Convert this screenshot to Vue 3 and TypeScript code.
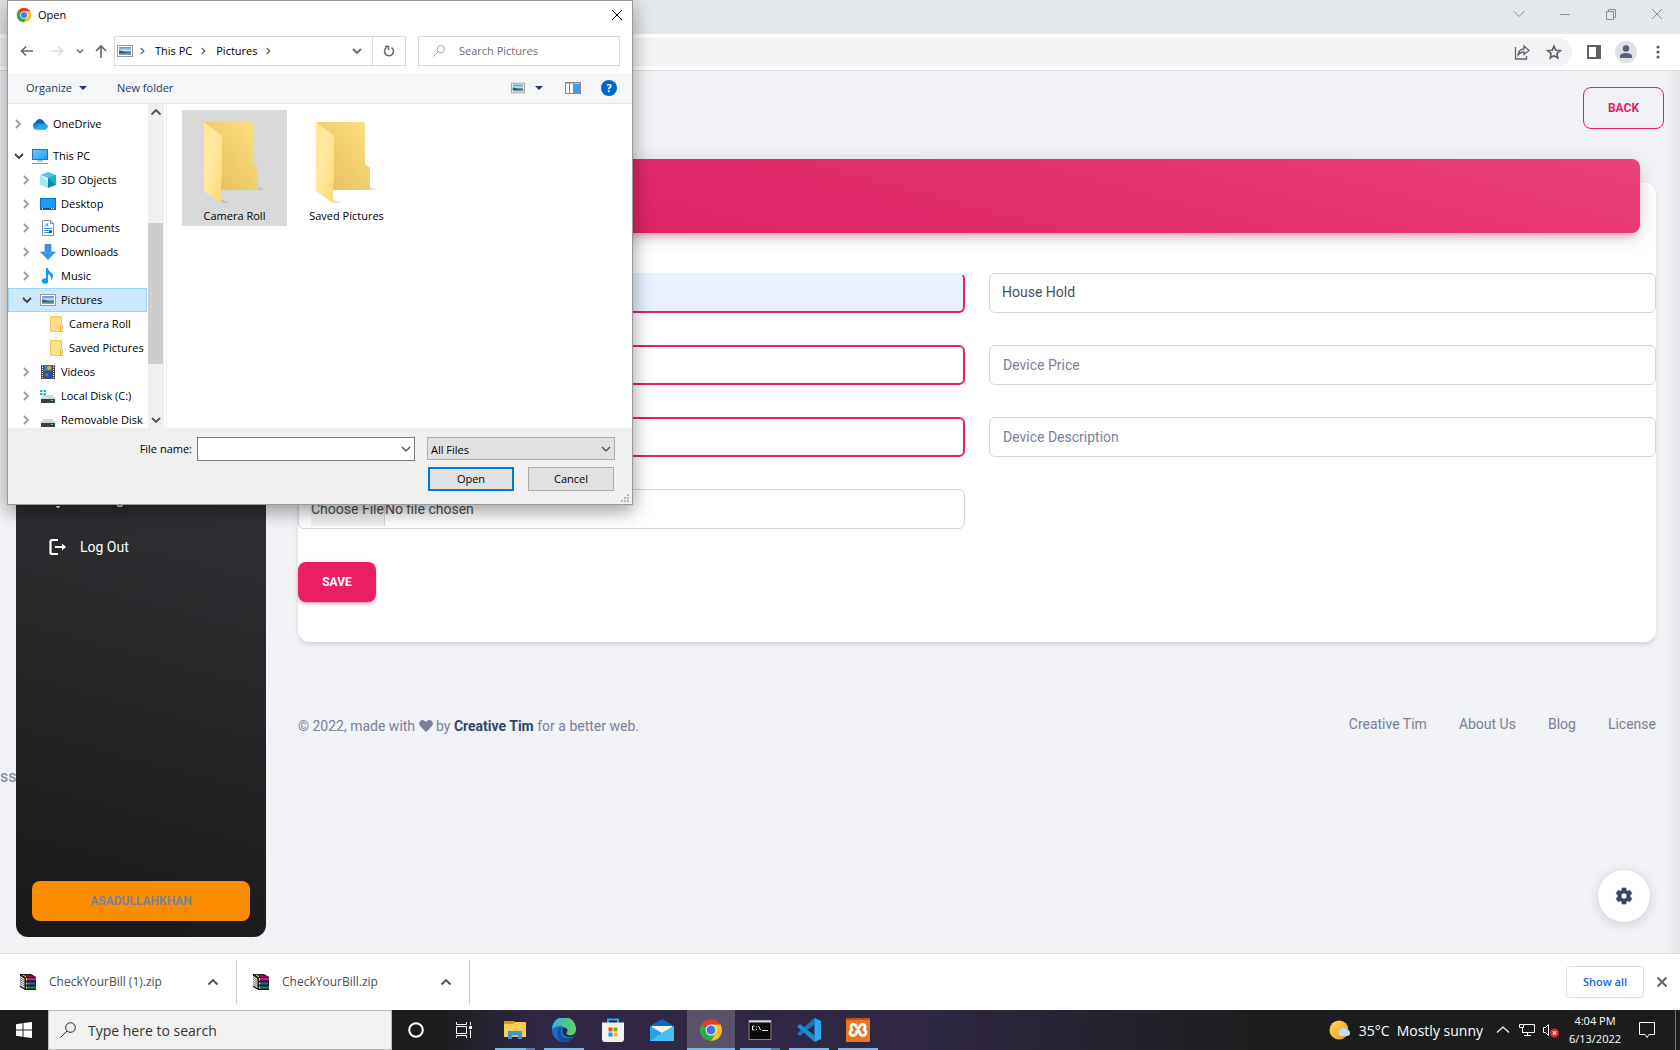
<script setup lang="ts">
import { ref } from 'vue'

interface TreeNode {
  label: string
  icon: string
  level: number
  state: 'open' | 'closed' | 'leaf'
  selected?: boolean
  spaced?: boolean
}

interface TaskApp {
  name: string
  icon: string
  running: boolean
  multi?: boolean
  active?: boolean
}

const tree: TreeNode[] = [
  { label: 'OneDrive', icon: 'onedrive', level: 0, state: 'closed', spaced: true },
  { label: 'This PC', icon: 'pc', level: 0, state: 'open' },
  { label: '3D Objects', icon: 'objects', level: 1, state: 'closed' },
  { label: 'Desktop', icon: 'desktop', level: 1, state: 'closed' },
  { label: 'Documents', icon: 'documents', level: 1, state: 'closed' },
  { label: 'Downloads', icon: 'downloads', level: 1, state: 'closed' },
  { label: 'Music', icon: 'music', level: 1, state: 'closed' },
  { label: 'Pictures', icon: 'pictures', level: 1, state: 'open', selected: true },
  { label: 'Camera Roll', icon: 'folder-small', level: 2, state: 'leaf' },
  { label: 'Saved Pictures', icon: 'folder-small', level: 2, state: 'leaf' },
  { label: 'Videos', icon: 'videos', level: 1, state: 'closed' },
  { label: 'Local Disk (C:)', icon: 'disk-c', level: 1, state: 'closed' },
  { label: 'Removable Disk', icon: 'disk', level: 1, state: 'closed' },
]

const folders = [
  { name: 'Camera Roll', selected: true },
  { name: 'Saved Pictures', selected: false },
]

const apps: TaskApp[] = [
  { name: 'File Explorer', icon: 'explorer', running: true, multi: true },
  { name: 'Edge', icon: 'edge', running: true },
  { name: 'Store', icon: 'store', running: false },
  { name: 'Mail', icon: 'mail', running: false },
  { name: 'Chrome', icon: 'chrome', running: true, active: true },
  { name: 'Command Prompt', icon: 'cmd', running: true, multi: true },
  { name: 'Visual Studio Code', icon: 'vscode', running: true },
  { name: 'XAMPP', icon: 'xampp', running: true },
]

const downloads = ['CheckYourBill (1).zip', 'CheckYourBill.zip']
const footerLinks = ['Creative Tim', 'About Us', 'Blog', 'License']

const fileName = ref('')
const deviceName = ref('')
const deviceModel = ref('')
const deviceQuantity = ref('')
const price = ref('')
const description = ref('')
</script>

<template>
  <div class="screen">
    <svg class="sprite" aria-hidden="true">
      <defs>
        <linearGradient id="g-folder" x1="0" y1="1" x2="1" y2="0">
          <stop offset="0" stop-color="#e3bd5a" /><stop offset="1" stop-color="#ffe080" />
        </linearGradient>
        <linearGradient id="g-flap" x1="0" y1="0" x2="1" y2="1">
          <stop offset="0" stop-color="#ffe596" /><stop offset="0.4" stop-color="#ffe9a2" /><stop offset="1" stop-color="#fbd877" />
        </linearGradient>
        <linearGradient id="g-sky" x1="0" y1="0" x2="0" y2="1">
          <stop offset="0" stop-color="#4b8fdc" /><stop offset="0.5" stop-color="#d7ebf7" /><stop offset="0.6" stop-color="#3f6b66" /><stop offset="1" stop-color="#7fb3cf" />
        </linearGradient>
        <linearGradient id="g-blue" x1="0" y1="0" x2="1" y2="1">
          <stop offset="0" stop-color="#6cc7ff" /><stop offset="1" stop-color="#1f9ff5" />
        </linearGradient>
        <linearGradient id="g-edge" x1="0" y1="0" x2="1" y2="0">
          <stop offset="0" stop-color="#2fb4e0" /><stop offset="1" stop-color="#5fd35b" />
        </linearGradient>
        <linearGradient id="g-sun" x1="0" y1="0" x2="1" y2="1">
          <stop offset="0" stop-color="#ffd95a" /><stop offset="1" stop-color="#f59a10" />
        </linearGradient>
      </defs>
      <symbol id="chrome" viewBox="0 0 24 24">
        <path d="M12 12 2.500 6.500A11 11 0 0 1 21.500 6.500Z" fill="#e33b2e" />
        <path d="M12 12 2.500 6.500A11 11 0 0 0 12 23l5-8Z" fill="#2da94f" />
        <path d="M12 6.500h9.500A11 11 0 0 1 12 23l4.800-8.200Z" fill="#fcc31e" />
        <circle cx="12" cy="12" r="5.500" fill="#fff" />
        <circle cx="12" cy="12" r="4.500" fill="#3b7bea" />
      </symbol>
      <symbol id="pictures" viewBox="0 0 16 16">
        <rect x="0.500" y="2.500" width="15" height="11" fill="#fff" stroke="#9a9a9a" />
        <rect x="2" y="4" width="12" height="8" fill="url(#g-sky)" />
        <path d="M2 7.500c3 0 5 2 9 2.500H2Z" fill="#2f5c55" />
      </symbol>
      <symbol id="onedrive" viewBox="0 0 16 16">
        <path d="M2 11.500a3.500 3.500 0 0 1 1.500-5.500A4.500 4.500 0 0 1 11.500 5l2 3-5 4Z" fill="#0a63c0" />
        <path d="M3.500 13.500A3 3 0 0 1 3 8l5-1 4 .5a3 3 0 0 1 1 6Z" fill="#1490df" />
        <path d="M2 12.500 10 8l5.500 1.500a3 3 0 0 1-2.500 4H4Z" fill="#28a8ea" />
      </symbol>
      <symbol id="pc" viewBox="0 0 16 16">
        <rect x="0.500" y="1.500" width="15" height="10" fill="url(#g-blue)" stroke="#3c6e99" />
        <path d="M5 13h6M0 15.500h16" stroke="#7e93a8" />
      </symbol>
      <symbol id="objects" viewBox="0 0 16 16">
        <path d="M0 3 8 0l8 3-8 3Z" fill="#4fc8d8" />
        <path d="M0 3 8 6v10l-8-3Z" fill="#a5e5ec" /><path d="M16 3 8 6v10l8-3Z" fill="#0c8fa8" />
        <path d="M0 3 8 6v5Z" fill="#d4f5f7" /><path d="M16 3v10L8 6Z" fill="#1ab3cc" />
      </symbol>
      <symbol id="desktop" viewBox="0 0 16 16">
        <rect x="0.500" y="2.500" width="15" height="11" fill="#1a9dff" stroke="#106ebe" />
        <path d="M1 12.500h14" stroke="#0b4f8c" /><path d="M2 12.500h1M11 12.500h1M13 12.500h1" stroke="#fff" />
      </symbol>
      <symbol id="documents" viewBox="0 0 16 16">
        <path d="M2.500.5h8l3 3v12h-11Z" fill="#fff" stroke="#8a8f94" />
        <path d="M10.500.5v3h3" fill="none" stroke="#8a8f94" />
        <path d="M5 6.500l2-3 1 3M4 8.500h8M4 10.500h8M4 12.500h8" fill="none" stroke="#3a8fd0" />
        <path d="M9 11h3v2H9Z" fill="#2b5c88" />
      </symbol>
      <symbol id="downloads" viewBox="0 0 16 16">
        <path d="M5 0h6v8h4.500L8 15.500.5 8H5Z" fill="#3a96e8" stroke="#2379c4" stroke-width=".6" />
      </symbol>
      <symbol id="music" viewBox="0 0 16 16">
        <ellipse cx="5" cy="13" rx="3.200" ry="2.700" fill="#0f9bf0" />
        <path d="M6 0h2c0 4 5 4 5 8 0 2-1 3-2 4 .5-3-.5-5-3-6v7H6Z" fill="#0f9bf0" />
      </symbol>
      <symbol id="folder-small" viewBox="0 0 16 16">
        <path d="M2.500.5h11v9l1 1v5h-12Z" fill="#ffe08a" stroke="#ecc65a" /><path d="M12.500 9.500v6" stroke="#e0b340" />
      </symbol>
      <symbol id="videos" viewBox="0 0 16 16">
        <path d="M1 1h14v14H1Z" fill="#4a4a4a" />
        <path d="M2.500 1v14M13.500 1v14" stroke="#fff" stroke-dasharray="1 1" />
        <path d="M4 1h8v6H4Z" fill="#3b73c9" /><path d="M4 8h8v7H4Z" fill="#2753a6" />
        <circle cx="9" cy="4" r="2" fill="#e8b523" /><circle cx="7" cy="11" r="1.500" fill="#e05a20" /><path d="M4 5h3v2H4Z" fill="#3e8f45" />
      </symbol>
      <symbol id="disk" viewBox="0 0 16 16">
        <path d="M3 7h10l2 4H1Z" fill="#d5d8da" /><rect x="1" y="11" width="14" height="4" fill="#3c4043" /><rect x="11" y="12" width="2" height="1" fill="#4dff4d" />
      </symbol>
      <symbol id="disk-c" viewBox="0 0 16 16">
        <path d="M3 7h10l2 4H1Z" fill="#d5d8da" /><rect x="1" y="11" width="14" height="4" fill="#3c4043" /><rect x="11" y="12" width="2" height="1" fill="#4dff4d" />
        <path d="M0 2h2.500v2H0ZM3.500 2H6v2H3.500ZM0 5h2.500v2H0ZM3.500 5H6v2H3.500Z" fill="#12b5ee" />
      </symbol>
      <symbol id="chev-right" viewBox="0 0 16 16">
        <path d="M5 4l4 4-4 4" fill="none" stroke="currentColor" stroke-width="1.800" />
      </symbol>
      <symbol id="chev-down" viewBox="0 0 16 16">
        <path d="M4 6l4 4 4-4" fill="none" stroke="currentColor" stroke-width="1.800" />
      </symbol>
      <symbol id="chev-thin" viewBox="0 0 16 16">
        <path d="M4 6l4 4 4-4" fill="none" stroke="currentColor" stroke-width="1.200" />
      </symbol>
      <symbol id="chev-up" viewBox="0 0 16 16">
        <path d="M3.500 10.500 8 6l4.500 4.500" fill="none" stroke="currentColor" stroke-width="1.800" />
      </symbol>
      <symbol id="magnifier" viewBox="0 0 16 16">
        <circle cx="10.500" cy="5.500" r="4.800" fill="none" stroke="currentColor" /><path d="M7 9 .5 15.500" stroke="currentColor" />
      </symbol>
      <symbol id="folder-large" viewBox="0 0 61 82">
        <path d="M50 68h11l-7-4ZM17 81h9l-9-4Z" fill="#000" opacity=".1" />
        <path d="M0 0h48q1 0 1 1v41l5 4v21q0 1-1 1H12Z" fill="url(#g-folder)" />
        <path d="M0 0l17 13q1 1 1 2v43l-1 3v20L1 70q-1-1-1-2Z" fill="url(#g-flap)" />
      </symbol>
      <symbol id="rar" viewBox="0 0 16 16">
        <path d="M0 0h11l5 3v13H5L0 13Z" fill="#1a1a1a" />
        <path d="M1 1h9l4 2H5Z" fill="#8c1246" />
        <path d="M6 4h10v2.500H6Z" fill="#c2188a" /><path d="M6 8.500h9v2H6Z" fill="#1470c8" /><path d="M6 12.500h10v2H6Z" fill="#0f9060" />
        <path d="M0 2.500l4.500 3M0 6.500l4.500 3M0 10.500l4.500 3M0 4.500l4.500 3M0 8.500l4.500 3" stroke="#f4f4f4" stroke-width="1.100" />
        <path d="M3 1l3 2M6.500 4v2.500M6.500 8.500v2M6.500 12.500v2" stroke="#f0e040" />
      </symbol>
      <symbol id="explorer" viewBox="0 0 24 24">
        <path d="M1 3h9l2 1h10q1 0 1 1v14H1Z" fill="#f8cf55" /><path d="M1 3h9l1.500 1.500L10 6H1Z" fill="#d9980f" />
        <path d="M5 13h14v8h-4v-4H9v4H5Z" fill="#3d95de" /><path d="M9 17h6v2H9Z" fill="#f0bb3c" />
      </symbol>
      <symbol id="edge" viewBox="0 0 24 24">
        <circle cx="12" cy="12" r="12" fill="#1670c6" />
        <path d="M0 11A12 12 0 0 1 24 11c0 5-4 7-8 6-2-.5-2-2-1-3C16 9 6 5 0 11Z" fill="url(#g-edge)" />
        <path d="M10 9c-4 5-1 13 8 11 2-.4 3-1 4-1-2 3-6 5-10 5C5 23 3 11 10 9Z" fill="#0d4f9e" />
        <path d="M11 10c3-1 6 2 4 4-1 1-1 2 1 3 3 1 6 0 8-2v3l-4 1c-7 1-11-4-9-9Z" fill="#2f2744" />
      </symbol>
      <symbol id="store" viewBox="0 0 24 24">
        <path d="M7 5V1.500h10V5" fill="none" stroke="#2aa7ee" stroke-width="2" />
        <path d="M1 4.500h22V21q0 3-3 3H4q-3 0-3-3Z" fill="#f1f1f2" />
        <path d="M7.500 9.500h4v4h-4Z" fill="#f25022" /><path d="M12.500 9.500h4v4h-4Z" fill="#7fba00" /><path d="M7.500 14.500h4v4h-4Z" fill="#00a4ef" /><path d="M12.500 14.500h4v4h-4Z" fill="#ffb900" />
      </symbol>
      <symbol id="mail" viewBox="0 0 24 24">
        <path d="M0 8 12 1l12 7v5H0Z" fill="#1466b8" /><path d="M2 8h20v7H2Z" fill="#f3f3f3" />
        <path d="M0 8l12 7 12-7v15H0Z" fill="#27a3e8" /><path d="M24 8 12 15 0 23h24Z" fill="#45c0f5" />
      </symbol>
      <symbol id="cmd" viewBox="0 0 24 24">
        <rect x="1" y="2.500" width="22" height="19" fill="#0b0b0b" stroke="#888" /><path d="M1 3.500h22" stroke="#d8d8d8" stroke-width="2" />
        <path d="M6.500 8h-2v4h2M8.500 8.500v1M8.500 11v1M10.500 8l2 4M14 12.500h6" fill="none" stroke="#e8e8e8" />
      </symbol>
      <symbol id="vscode" viewBox="0 0 24 24">
        <path d="M0 15.500 17.500 0v6.500L3 18Z" fill="#1377c2" /><path d="M0 8.500 3 6l14.500 11.500V24Z" fill="#1b8ad6" />
        <path d="M17.500 0 24 3v18l-6.500 3Z" fill="#2fa8f0" />
      </symbol>
      <symbol id="xampp" viewBox="0 0 24 24">
        <rect width="24" height="24" rx="1" fill="#ee7421" /><path d="M0 1h24" stroke="#b5531a" stroke-width="2" />
        <path d="M8 6.500a2.500 2.500 0 0 0-1 5 2.800 2.800 0 0 0 0 6c2.500 0 3-1 3.500-3M16 6.500a2.500 2.500 0 0 1 1 5 2.800 2.800 0 0 1 0 6c-2.500 0-3-1-3.500-3M8 6.500c3 0 1.500 3.500 4 3.500s1-3.500 4-3.500M10.500 14.500c0-2 3-2 3 0" fill="none" stroke="#fff" stroke-width="2.800" stroke-linecap="round" />
      </symbol>
    </svg>

    <header class="chrome-top">
      <div class="tabstrip">
        <svg viewBox="0 0 16 16"><path d="M2.500 5 8 10.500 13.500 5" /></svg>
        <svg viewBox="0 0 16 16"><path d="M3 8.500h10" /></svg>
        <svg viewBox="0 0 16 16"><path d="M3.500 5.500h7v8h-7ZM5.500 5.500v-2h7v8h-2" /></svg>
        <svg viewBox="0 0 16 16"><path d="M3 3l10 10M13 3 3 13" /></svg>
      </div>
      <div class="toolbar">
        <div class="omnibox">
          <svg viewBox="0 0 16 16"><path d="M1.500 3v12h11v-3M4 11c.5-4 3-6 6-6V2l5 4.500-5 4V8c-3 0-4.500 1-6 3Z" fill="none" stroke="#5f6368" stroke-width="1.300" /></svg>
          <svg viewBox="0 0 16 16"><path d="M8 2l1.800 4.200 4.500.4-3.400 3 1 4.400L8 11.700 4.100 14l1-4.400-3.400-3 4.500-.4Z" fill="none" stroke="#5f6368" stroke-width="1.600" /></svg>
        </div>
        <svg class="side-icon" viewBox="0 0 16 16"><path d="M1 1h14v14H1ZM3 3v10h7V3Z" fill="#5f6368" fill-rule="evenodd" /></svg>
        <span class="avatar"><svg viewBox="0 0 16 16"><circle cx="8" cy="4.500" r="3.200" fill="#56607a" /><path d="M2 14v-2c0-4 12-4 12 0v2Z" fill="#56607a" /></svg></span>
        <svg class="more" viewBox="0 0 16 16"><circle cx="8" cy="3" r="1.600" /><circle cx="8" cy="8" r="1.600" /><circle cx="8" cy="13" r="1.600" /></svg>
      </div>
    </header>

    <div class="page">
      <span class="stray">ss</span>
      <aside class="sidebar">
        <nav class="side-nav">
          <a href="#"><svg viewBox="0 0 20 20"><path d="M10 19a2 2 0 0 0 2-2H8a2 2 0 0 0 2 2Zm6-5v-4c0-3-1.500-5-4.500-5.500a1.500 1.500 0 0 0-3 0C5.500 5 4 7 4 10v4l-1 1v1h14v-1Z" fill="#fff" /></svg>Settings</a>
          <a href="#"><svg viewBox="0 0 20 20"><path d="M10 3H4q-1.500 0-1.500 1.500v11Q2.500 17 4 17h6" fill="none" stroke="#fff" stroke-width="2.200" /><path d="M7 10h8" fill="none" stroke="#fff" stroke-width="2" /><path d="M14 6.500 18 10l-4 3.500Z" fill="#fff" /></svg>Log Out</a>
        </nav>
        <button class="user-btn" type="button">ASADULLAHKHAN</button>
      </aside>

      <main class="content">
        <button class="back-btn" type="button">BACK</button>
        <form class="card" @submit.prevent>
          <div class="card-head"></div>
          <div class="fields">
            <input v-model="deviceName" class="field required autofilled" type="text" aria-label="Device name" />
            <select class="field picked" aria-label="Category"><option>House Hold</option></select>
            <input v-model="deviceModel" class="field required" type="text" aria-label="Device model" />
            <input v-model="price" class="field" type="text" placeholder="Device Price" aria-label="Device Price" />
            <input v-model="deviceQuantity" class="field required" type="text" aria-label="Device quantity" />
            <input v-model="description" class="field" type="text" placeholder="Device Description" aria-label="Device Description" />
            <input class="field file" type="file" aria-label="Device image" />
          </div>
          <button class="save-btn" type="submit">SAVE</button>
        </form>
        <footer class="foot">
          <p>© 2022, made with <svg viewBox="0 0 14 14"><path d="M7 13 1 7C-1 4 1 1 3.500 1 5 1 6.300 2 7 3c.7-1 2-2 3.500-2C13 1 15 4 13 7Z" fill="#7b809a" /></svg> by <a href="#"><b>Creative Tim</b></a> for a better web.</p>
          <nav><a v-for="link in footerLinks" :key="link" href="#">{{ link }}</a></nav>
        </footer>
      </main>

      <button class="gear" type="button" aria-label="Configure">
        <svg viewBox="0 0 20 20"><path d="M8 1h4l.5 2.600 1.700 1L16.700 3.700l2 3.500-2 1.700v2.200l2 1.700-2 3.500-2.500-.9-1.700 1L12 19H8l-.5-2.600-1.700-1-2.500.9-2-3.500 2-1.700V8.900l-2-1.700 2-3.500 2.500.9 1.700-1ZM10 6.800a3.200 3.200 0 1 0 0 6.400 3.200 3.200 0 0 0 0-6.400Z" fill="#344767" fill-rule="evenodd" stroke="#344767" stroke-width=".6" stroke-linejoin="round" /></svg>
      </button>
    </div>

    <div class="shelf">
      <div v-for="file in downloads" :key="file" class="dl">
        <svg class="i16"><use href="#rar" /></svg>
        <span>{{ file }}</span>
        <button type="button" aria-label="More"><svg class="i16"><use href="#chev-up" /></svg></button>
      </div>
      <button class="show-all" type="button">Show all</button>
      <button class="shelf-close" type="button" aria-label="Close"><svg viewBox="0 0 16 16"><path d="M3.500 3.500l9 9M12.500 3.500l-9 9" stroke="#5f6368" stroke-width="2" /></svg></button>
    </div>

    <div class="taskbar">
      <button class="slot" type="button" aria-label="Start"><svg class="i16" viewBox="0 0 16 16"><path d="M0 2.200 6.500 1.300v6.200H0ZM7.500 1.100 16 0v7.500H7.500ZM0 8.500h6.500v6.200L0 13.800ZM7.500 8.500H16V16l-8.500-1.100Z" fill="#fff" /></svg></button>
      <label class="task-search">
        <svg class="i16"><use href="#magnifier" /></svg>
        <input type="text" placeholder="Type here to search" />
      </label>
      <button class="slot" type="button" aria-label="Cortana"><svg class="i16" viewBox="0 0 16 16"><circle cx="8" cy="8" r="6.800" fill="none" stroke="#fff" stroke-width="2" /></svg></button>
      <button class="slot" type="button" aria-label="Task view"><svg class="i16" viewBox="0 0 16 16"><path d="M.5 0v2.500h10V0M.5 4.500h10v7H.5ZM.5 16v-2.500h10V16M14.500 0v3M14.500 8v8" fill="none" stroke="#fff" /><path d="M13 4h3v3h-3Z" fill="#fff" /></svg></button>
      <div class="apps">
        <button v-for="app in apps" :key="app.name" class="slot" :class="{ running: app.running, multi: app.multi, active: app.active }" type="button" :aria-label="app.name">
          <svg class="i24"><use :href="'#' + app.icon" /></svg>
        </button>
      </div>
      <div class="tray">
        <svg class="weather" viewBox="0 0 22 20"><circle cx="10" cy="10" r="9.500" fill="url(#g-sun)" /><path d="M11 16a3.500 3.500 0 0 1 0-6 4 4 0 0 1 7 0 3 3 0 0 1 0 6Z" fill="#b9e0fa" /></svg>
        <span class="temp">35°C</span>
        <span class="sky">Mostly sunny</span>
        <svg class="i16" viewBox="0 0 16 16"><path d="M2 10.500 8 5l6 5.500" fill="none" stroke="#fff" stroke-width="1.200" /></svg>
        <svg class="i16" viewBox="0 0 16 16"><path d="M5 2.500h10.500v8H3.500M3.500 6v5M8.500 10.500v3M5 13.500h7M.5 2.500h4v3h-4Z" fill="none" stroke="#fff" /></svg>
        <svg class="i16" viewBox="0 0 16 16"><path d="M.5 5.500h2l3-3v11l-3-3h-2Z" fill="none" stroke="#fff" /><circle cx="11.500" cy="11" r="4.500" fill="#d9272e" /><path d="M9.800 9.300l3.400 3.400M13.200 9.300l-3.400 3.400" stroke="#fff" stroke-width="1.200" /></svg>
        <div class="clock"><span>4:04 PM</span><span>6/13/2022</span></div>
        <svg class="i16" viewBox="0 0 16 16"><path d="M.5.5h15v12H10l-2 3-2-3H.5Z" fill="none" stroke="#fff" /></svg>
        <span class="peek"></span>
      </div>
    </div>

    <section class="dialog" role="dialog" aria-label="Open">
      <div class="dlg-title">
        <svg class="i16"><use href="#chrome" /></svg>
        <span>Open</span>
        <button type="button" aria-label="Close"><svg class="i16" viewBox="0 0 16 16"><path d="M3 3l10 10M13 3 3 13" stroke="#000" /></svg></button>
      </div>
      <div class="dlg-nav">
        <button class="w30" type="button" aria-label="Back"><svg class="i16" viewBox="0 0 16 16"><path d="M14 8H3M7 3.500 2.500 8 7 12.500" fill="none" stroke="#666" stroke-width="1.600" /></svg></button>
        <button class="w30" type="button" aria-label="Forward"><svg class="i16" viewBox="0 0 16 16"><path d="M2 8h11M9 3.500 13.500 8 9 12.500" fill="none" stroke="#ddd" stroke-width="1.600" /></svg></button>
        <button class="w16" type="button" aria-label="Recent"><svg class="i12"><use href="#chev-down" /></svg></button>
        <button class="w26" type="button" aria-label="Up"><svg class="i16" viewBox="0 0 16 16"><path d="M8 15V3.500M3 8l5-5 5 5" fill="none" stroke="#666" stroke-width="1.600" /></svg></button>
        <div class="address">
          <svg class="i16"><use href="#pictures" /></svg>
          <svg class="i12"><use href="#chev-right" /></svg>
          <span>This PC</span>
          <svg class="i12"><use href="#chev-right" /></svg>
          <span>Pictures</span>
          <svg class="i12"><use href="#chev-right" /></svg>
          <svg class="i16 drop"><use href="#chev-down" /></svg>
          <button type="button" aria-label="Refresh"><svg class="i16" viewBox="0 0 16 16"><path d="M10.500 4.500a4.500 4.500 0 1 1-5 0M4 3.500h3.500V7" fill="none" stroke="#666" stroke-width="1.500" /></svg></button>
        </div>
        <label class="dlg-search"><svg class="i12"><use href="#magnifier" /></svg><input type="text" placeholder="Search Pictures" /></label>
      </div>
      <div class="dlg-tools">
        <button type="button">Organize <i class="tri"></i></button>
        <button type="button">New folder</button>
        <span class="grow"></span>
        <svg class="i14"><use href="#pictures" /></svg>
        <i class="tri"></i>
        <svg class="i16" viewBox="0 0 16 16"><rect x=".5" y="2.500" width="15" height="11" fill="#fff" stroke="#888" /><path d="M0 3h16M4.500 3v10M8.500 3v10" stroke="#888" /><path d="M9 4h6v9H9Z" fill="#3d9ae8" /></svg>
        <button class="help" type="button">?</button>
      </div>
      <div class="dlg-body">
        <ul class="tree">
          <li v-for="node in tree" :key="node.label + node.level" :class="[node.state, 'lv' + node.level, { selected: node.selected, spaced: node.spaced }]">
            <svg class="i16 arrow"><use v-if="node.state !== 'leaf'" :href="node.state === 'open' ? '#chev-down' : '#chev-right'" /></svg>
            <svg class="i16"><use :href="'#' + node.icon" /></svg>
            <span>{{ node.label }}</span>
          </li>
        </ul>
        <div class="scroll">
          <svg class="i16"><use href="#chev-up" /></svg>
          <div class="track"><div class="thumb"></div></div>
          <svg class="i16"><use href="#chev-down" /></svg>
        </div>
        <div class="files">
          <figure v-for="f in folders" :key="f.name" :class="{ picked: f.selected }">
            <svg width="61" height="82"><use href="#folder-large" /></svg>
            <figcaption>{{ f.name }}</figcaption>
          </figure>
        </div>
      </div>
      <div class="dlg-foot">
        <div class="foot-row">
          <label for="fname">File name:</label>
          <div class="combo name"><input id="fname" v-model="fileName" type="text" /><svg class="i16"><use href="#chev-thin" /></svg></div>
          <div class="combo type"><select aria-label="File type"><option>All Files</option></select><svg class="i16"><use href="#chev-thin" /></svg></div>
        </div>
        <div class="foot-row actions">
          <button class="primary" type="button">Open</button>
          <button type="button">Cancel</button>
        </div>
        <svg class="grip" viewBox="0 0 8 8"><path d="M6 0h2v2H6ZM3 3h2v2H3ZM6 3h2v2H6ZM0 6h2v2H0ZM3 6h2v2H3ZM6 6h2v2H6Z" fill="#b8b8b8" /></svg>
      </div>
    </section>
  </div>
</template>

<style>
body { margin: 0; }
</style>

<style scoped>
*, *::before, *::after { box-sizing: border-box; }
button, input, select { font: inherit; color: inherit; margin: 0; border: 0; background: none; padding: 0; outline: 0; }
a { color: inherit; text-decoration: none; }
svg { display: block; flex: none; }
.sprite { position: absolute; width: 0; height: 0; }
.i12 { width: 12px; height: 12px; }
.i14 { width: 14px; height: 14px; }
.i16 { width: 16px; height: 16px; }
.i24 { width: 24px; height: 24px; }

.screen { position: relative; display: flex; flex-direction: column; min-height: 100vh; overflow: hidden; background: #f0f2f5; font-family: Roboto, sans-serif; font-size: 14px; color: #7b809a; }

.tabstrip { height: 34px; background: #e4e8eb; display: flex; justify-content: flex-end; gap: 30px; padding: 6px 15px 0 0; }
.tabstrip svg { width: 16px; height: 16px; fill: none; stroke: #8a8d91; }
.toolbar { height: 37px; background: #fff; border-bottom: 1px solid #d9dbde; display: flex; align-items: center; padding-right: 14px; }
.omnibox { flex: 1; height: 28px; border-radius: 0 14px 14px 0; background: #f1f3f4; display: flex; justify-content: flex-end; align-items: center; gap: 16px; padding-right: 10px; }
.omnibox svg { width: 16px; height: 16px; }
.side-icon { width: 16px; height: 16px; margin: 0 13px 0 14px; }
.avatar { width: 22px; height: 22px; border-radius: 50%; background: #dee1e6; display: grid; place-items: center; }
.avatar svg { width: 16px; height: 16px; }
.more { width: 16px; height: 16px; margin-left: 13px; fill: #5f6368; }

.page { position: relative; flex: 1; display: flex; align-items: stretch; gap: 32px; padding: 16px; }
.page::after { content: ''; position: absolute; inset: 0 0 0 auto; width: 16px; background: linear-gradient(90deg, rgba(0, 0, 0, 0), rgba(0, 0, 0, 0.06)); }
.stray { position: absolute; left: 0; top: 696px; font-size: 16px; line-height: 20px; }
.sidebar { position: relative; width: 250px; flex: none; border-radius: 12px; padding: 388px 16px 16px; background: linear-gradient(195deg, #42424a, #191919); display: flex; flex-direction: column; justify-content: space-between; }
.side-nav a { display: flex; align-items: center; gap: 12px; height: 48px; padding-left: 16px; color: #fff; }
.side-nav svg { width: 20px; height: 20px; }
.user-btn { height: 40px; border-radius: 8px; background: #fb8c00; color: #7b809a; font-size: 12px; font-weight: 700; }
.content { flex: 1; min-width: 0; display: flex; flex-direction: column; }
.back-btn { align-self: flex-end; width: 81px; height: 42px; border: 1px solid #e91e63; border-radius: 8px; color: #e91e63; font-size: 12px; font-weight: 700; }
.card { margin: 54px 8px 0 0; background: #fff; border-radius: 12px; padding-bottom: 40px; box-shadow: 0 4px 6px -1px rgba(0, 0, 0, 0.1), 0 2px 4px -1px rgba(0, 0, 0, 0.06); }
.card-head { height: 74px; margin: -24px 16px 40px; border-radius: 8px; background: linear-gradient(195deg, #ec407a, #d81b60); box-shadow: 0 4px 20px 0 rgba(0, 0, 0, 0.14), 0 7px 10px -5px rgba(233, 30, 99, 0.4); }
.fields { display: grid; grid-template-columns: 1fr 1fr; gap: 32px 24px; }
.field { width: 100%; height: 40px; border: 1px solid #d2d6da; border-radius: 6px; padding: 0 13px; background: #fff; color: #495057; appearance: none; }
.field::placeholder { color: #7b809a; opacity: 1; }
.field.picked { padding: 0 12px 2px; }
.field.required { border: 2px solid #e91e63; }
.field.autofilled { background: #e8f0fe; border-top-color: #e8f0fe; }
.field.file { padding: 0 12px; line-height: 38px; }
.field.file::file-selector-button { font: inherit; color: #495057; height: 36px; margin: 0; padding: 0; border: 0; border-right: 1px solid #d2d6da; background: #f0f0f0; }
.save-btn { display: block; margin-top: 33px; width: 78px; height: 40px; border-radius: 8px; background: #e91e63; color: #fff; font-size: 12px; font-weight: 700; box-shadow: 0 3px 3px 0 rgba(233, 30, 99, 0.15), 0 3px 1px -2px rgba(233, 30, 99, 0.2), 0 1px 5px 0 rgba(233, 30, 99, 0.15); }
.foot { display: flex; justify-content: space-between; margin: 72px 8px 0 0; line-height: 20px; }
.foot p { margin: 2px 0 0; }
.foot p svg { display: inline-block; width: 14px; height: 14px; vertical-align: -2px; }
.foot b { color: #344767; }
.foot nav { display: flex; gap: 32px; }
.gear { position: absolute; right: 30px; bottom: 31px; width: 52px; height: 52px; border-radius: 50%; background: #fff; display: grid; place-items: center; box-shadow: 0 2px 12px 0 rgba(0, 0, 0, 0.16); }
.gear svg { width: 18px; height: 18px; }

.shelf { display: flex; align-items: center; height: 57px; background: #fff; border-top: 1px solid #d9dbde; padding-right: 10px; font: 12px/16px "Open Sans", sans-serif; color: #5f6368; }
.dl { display: flex; align-items: center; width: 237px; height: 44px; padding: 0 15px 0 20px; border-right: 1px solid #ccc; color: #4a4d51; }
.dl + .dl { width: 233px; padding-left: 16px; }
.dl span { flex: 1; margin-left: 13px; }
.show-all { margin-left: auto; width: 78px; height: 32px; border: 1px solid #dadce0; border-radius: 4px; color: #1a66e8; font-size: 11px; font-weight: 600; }
.shelf-close { margin-left: 10px; }
.shelf-close svg { width: 16px; height: 16px; }

.taskbar { display: flex; height: 40px; background: linear-gradient(90deg, #1c1c1c 26%, #2f2744 32%, #2f2744 54%, #1c1c1c 76%); color: #fff; font-family: "Open Sans", sans-serif; }
.slot { position: relative; width: 48px; height: 40px; display: grid; place-items: center; flex: none; }
.task-search { display: flex; align-items: center; gap: 12px; width: 344px; background: #f1f1f1; border: 1px solid #b9b9b9; padding-left: 11px; color: #222; }
.task-search input { flex: 1; min-width: 0; font-size: 14px; }
.task-search input::placeholder { color: #333; opacity: 1; }
.apps { display: flex; gap: 1px; margin-left: 3px; }
.slot.running::after { content: ''; position: absolute; left: 4px; right: 4px; bottom: 0; height: 2px; background: #76b9ed; }
.slot.multi::after { background: linear-gradient(90deg, #76b9ed 78%, #557fa5 78%); }
.slot.active { background: #5a5268; }
.slot.active::after { left: 0; right: 0; }
.tray { display: flex; align-items: center; margin-left: auto; font-size: 14px; white-space: nowrap; }
.weather { width: 22px; height: 20px; }
.temp { margin: 0 7px 0 8px; }
.sky { margin-right: 12px; }
.tray .i16 + .i16 { margin-left: 8px; }
.clock { width: 72px; display: flex; flex-direction: column; align-items: center; font-size: 11px; line-height: 18px; }
.clock + .i16 { margin: 0 20px 0 8px; }
.peek { width: 5px; height: 40px; border-left: 1px solid #777; }

.dialog { position: absolute; left: 7px; top: 0; width: 626px; background: #fff; border: 1px solid #999; box-shadow: 0 6px 18px rgba(0, 0, 0, 0.4); font: 11px/16px "Open Sans", sans-serif; color: #000; }
.dlg-title { display: flex; align-items: center; gap: 6px; height: 29px; padding: 0 7px 2px 8px; }
.dlg-title button { margin-left: auto; }
.dlg-nav { display: flex; align-items: center; height: 43px; padding: 0 12px 1px 4px; color: #666; }
.dlg-nav button { display: grid; place-items: center; height: 28px; }
.w30 { width: 30px; }
.w16 { width: 16px; }
.w26 { width: 26px; }
.address { display: flex; align-items: center; flex: 1; height: 30px; border: 1px solid #d9d9d9; padding-left: 2px; }
.address span { color: #000; margin: 0 6px; }
.address .i16 + .i12 { margin-left: 4px; }
.address .drop { margin-left: auto; margin-right: 7px; }
.address button { width: 33px; border-left: 1px solid #d9d9d9; }
.dlg-search { display: flex; align-items: center; width: 202px; height: 30px; margin-left: 12px; border: 1px solid #d9d9d9; padding-left: 14px; gap: 14px; color: #888; }
.dlg-search input { flex: 1; min-width: 0; }
.dlg-search input::placeholder { color: #6d6d6d; opacity: 1; }
.dlg-tools { display: flex; align-items: center; height: 31px; padding: 0 15px 0 18px; background: #f5f6f7; border-bottom: 1px solid #e5e5e5; color: #1e395b; }
.dlg-tools button { display: flex; align-items: center; gap: 7px; margin-right: 30px; }
.tri { border: 4px solid transparent; border-top-color: #1e395b; border-bottom: 0; }
.grow { flex: 1; }
.dlg-tools > .tri { margin: 0 22px 0 10px; }
.dlg-tools .help { justify-content: center; width: 16px; height: 16px; margin: 0 0 0 20px; border-radius: 50%; background: #0066cc; color: #fff; font-weight: 700; }
.dlg-body { display: flex; height: 324px; }
.tree { list-style: none; width: 140px; margin: 0; padding: 8px 0 0; overflow: hidden; }
.tree li { display: flex; align-items: center; gap: 5px; width: 139px; height: 24px; white-space: nowrap; }
.tree .arrow { color: #a0a0a0; }
.tree .open .arrow { color: #404040; }
.lv0 { padding-left: 3px; }
.lv1 { padding-left: 11px; }
.lv2 { padding-left: 19px; }
.tree .spaced { margin-bottom: 8px; }
.tree .selected { background: #cce8ff; box-shadow: inset 0 0 0 1px #99d1ff; }
.scroll { display: flex; flex-direction: column; width: 16px; background: #f0f0f0; color: #505050; }
.track { flex: 1; }
.thumb { width: 15px; height: 141px; margin-top: 103px; background: #cdcdcd; }
.files { display: flex; gap: 7px; flex: 1; align-items: flex-start; margin-left: 2px; padding: 6px 15px; border-left: 1px solid #f0f0f0; }
.files figure { margin: 0; width: 105px; height: 116px; padding-top: 12px; display: flex; flex-direction: column; align-items: center; }
.files figcaption { margin-top: 4px; }
.files .picked { background: #d9d9d9; }
.dlg-foot { position: relative; height: 76px; padding: 9px 17px 0 0; background: #f0f0f0; }
.foot-row { display: flex; justify-content: flex-end; align-items: flex-start; height: 24px; margin-bottom: 6px; line-height: 24px; }
.foot-row > label { margin-right: 5px; }
.combo { position: relative; }
.combo svg { position: absolute; right: 1px; top: 4px; color: #444; pointer-events: none; }
.combo input, .combo select { display: block; width: 100%; height: 24px; border: 1px solid #7a7a7a; background: #fff; padding: 0 3px; appearance: none; }
.combo select { height: 23px; border-color: #adadad; background: #e1e1e1; }
.name { width: 218px; margin-right: 12px; }
.type { width: 188px; }
.actions { padding-right: 1px; }
.foot-row button { width: 86px; height: 24px; margin-left: 14px; border: 1px solid #adadad; background: #e1e1e1; line-height: 20px; }
.foot-row button.primary { border: 2px solid #0078d7; }
.grip { position: absolute; right: 3px; bottom: 2px; width: 8px; height: 8px; }
</style>
